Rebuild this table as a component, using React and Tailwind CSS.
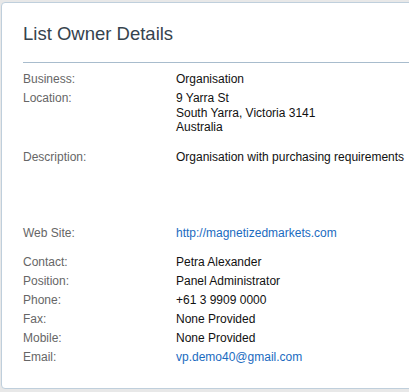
const rowsTop = [
  { label: 'Business:', value: ['Organisation'] },
  { label: 'Location:', value: ['9 Yarra St', 'South Yarra, Victoria 3141', 'Australia'] },
];

const rowsContact = [
  { label: 'Contact:', value: ['Petra Alexander'] },
  { label: 'Position:', value: ['Panel Administrator'] },
  { label: 'Phone:', value: ['+61 3 9909 0000'] },
  { label: 'Fax:', value: ['None Provided'] },
  { label: 'Mobile:', value: ['None Provided'] },
  { label: 'Email:', value: ['vp.demo40@gmail.com'], link: true },
];

function Row({ label, value, link, className = '' }) {
  return (
    <div className={`flex pt-[2px] pb-[2.5px] text-[12px] leading-[14.5px] ${className}`}>
      <div className="w-[153px] shrink-0 text-[#666]">{label}</div>
      <div className={`whitespace-nowrap ${link ? 'text-[#1a6bbf]' : 'text-[#111]'}`}>
        {value.map((line) => (
          <div key={line}>{line}</div>
        ))}
      </div>
    </div>
  );
}

export default function App() {
  return (
    <div
      className="h-[392px] w-[409px] overflow-hidden bg-[#e8e8e8] pl-[1px] pt-[2px]"
      style={{ fontFamily: '"Liberation Sans", Arial, sans-serif' }}
    >
      <div className="w-[440px] rounded-[4px] border border-[#bfcfdc] bg-white pl-[21px] pt-[20px] pb-[21px]">
        <h1 className="text-[18.5px] leading-[22px] text-[#36434e]">List Owner Details</h1>
        <div className="mt-[17px] mb-[7px] h-px bg-[#a8bccd]" />

        {rowsTop.map((r) => (
          <Row key={r.label} {...r} />
        ))}

        <Row className="mt-[11px] mb-[57px]" label="Description:" value={['Organisation with purchasing requirements']} />

        <Row label="Web Site:" value={['http://magnetizedmarkets.com']} link />

        <div className="mt-[10px]">
          {rowsContact.map((r) => (
            <Row key={r.label} {...r} />
          ))}
        </div>
      </div>
    </div>
  );
}
